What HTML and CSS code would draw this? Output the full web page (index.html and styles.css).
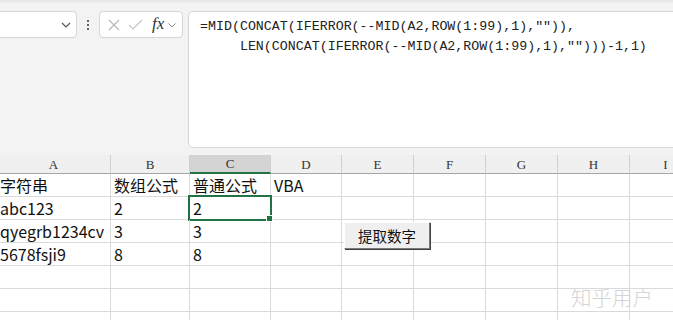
FILE: index.html
```html
<!DOCTYPE html>
<html lang="zh">
<head>
<meta charset="utf-8">
<link rel="stylesheet" href="styles.css">
</head>
<body>
<div class="app">
  <div class="toolbar">
    <div class="namebox">
      <svg class="chev" width="10" height="6" viewBox="0 0 10 6"><path d="M1 1l4 4 4-4" fill="none" stroke="#555" stroke-width="1.2"/></svg>
    </div>
    <div class="dots"><span></span><span></span><span></span></div>
    <div class="fxbox">
      <svg class="ico" width="12" height="12" viewBox="0 0 12 12"><path d="M1 1l10 10M11 1L1 11" stroke="#b8b8b8" stroke-width="1.2" fill="none"/></svg>
      <svg class="ico chk" width="15" height="11" viewBox="0 0 15 11"><path d="M1 6l4 4 9-9" stroke="#c4c4c4" stroke-width="1.2" fill="none"/></svg>
      <span class="fx">fx</span>
      <svg class="chev2" width="8" height="5" viewBox="0 0 8 5"><path d="M.5.5l3.5 3.5 3.5-3.5" fill="none" stroke="#888" stroke-width="1"/></svg>
    </div>
    <div class="formula"><pre class="ftext">=MID(CONCAT(IFERROR(--MID(A2,ROW(1:99),1),"")),
     LEN(CONCAT(IFERROR(--MID(A2,ROW(1:99),1),"")))-1,1)</pre></div>
  </div>
  <div class="sheet">
    <div class="grid">
      <div class="ch">A</div><div class="ch">B</div><div class="ch sel">C</div><div class="ch">D</div><div class="ch">E</div><div class="ch">F</div><div class="ch">G</div><div class="ch">H</div><div class="ch">I</div>

      <div class="c a">字符串</div><div class="c">数组公式</div><div class="c">普通公式</div><div class="c">VBA</div><div class="c"></div><div class="c"></div><div class="c"></div><div class="c"></div><div class="c"></div>

      <div class="c a">abc123</div><div class="c">2</div><div class="c active">2</div><div class="c"></div><div class="c"></div><div class="c"></div><div class="c"></div><div class="c"></div><div class="c"></div>

      <div class="c a">qyegrb1234cv</div><div class="c">3</div><div class="c">3</div><div class="c"></div><div class="c"></div><div class="c"></div><div class="c"></div><div class="c"></div><div class="c"></div>

      <div class="c a">5678fsji9</div><div class="c">8</div><div class="c">8</div><div class="c"></div><div class="c"></div><div class="c"></div><div class="c"></div><div class="c"></div><div class="c"></div>

      <div class="c a"></div><div class="c"></div><div class="c"></div><div class="c"></div><div class="c"></div><div class="c"></div><div class="c"></div><div class="c"></div><div class="c"></div>

      <div class="c a"></div><div class="c"></div><div class="c"></div><div class="c"></div><div class="c"></div><div class="c"></div><div class="c"></div><div class="c"></div><div class="c"></div>

      <div class="c a"></div><div class="c"></div><div class="c"></div><div class="c"></div><div class="c"></div><div class="c"></div><div class="c"></div><div class="c"></div><div class="c"></div>
    </div>
    <button class="btn">提取数字</button>
    <div class="watermark">知乎用户</div>
  </div>
</div>
</body>
</html>
```

FILE: styles.css
```css
html, body {
  margin: 0;
  padding: 0;
  background: #ffffff;
}
.app {
  width: 673px;
  height: 320px;
  overflow: hidden;
  position: relative;
}
.toolbar {
  height: 155px;
  background: #f3f3f3;
  background-image: linear-gradient(#e4e4e4, #f3f3f3 4px);
  display: flex;
  align-items: flex-start;
  padding-top: 11px;
  box-sizing: border-box;
}
.namebox {
  width: 83px;
  height: 27px;
  margin-left: -6px;
  box-sizing: border-box;
  background: #fff;
  border: 1px solid #d6d6d6;
  border-radius: 4px;
  display: flex;
  align-items: center;
  justify-content: flex-end;
  padding-right: 5px;
}
.dots {
  width: 22px;
  height: 27px;
  display: flex;
  flex-direction: column;
  align-items: center;
  justify-content: center;
  gap: 2px;
}
.dots span {
  width: 2px;
  height: 2px;
  background: #333;
  border-radius: 1px;
}
.fxbox {
  width: 84px;
  height: 27px;
  box-sizing: border-box;
  background: #fff;
  border: 1px solid #d6d6d6;
  border-radius: 4px;
  display: flex;
  align-items: center;
  padding-left: 8px;
}
.ico { margin-right: 8px; }
.chk { margin-right: 9px; }
.fx {
  font-family: "Liberation Serif", "DejaVu Serif", serif;
  font-style: italic;
  font-size: 17px;
  color: #333;
  margin-right: 4px;
  line-height: 1;
  margin-top: -2px;
}
.chev2 { margin-top: 1px; }
.formula {
  margin-left: 5px;
  margin-right: -10px;
  flex: 1;
  height: 137px;
  box-sizing: border-box;
  background: #fff;
  border: 1px solid #d6d6d6;
  border-radius: 5px;
  padding: 5px 0 0 11px;
}
.ftext {
  margin: 0;
  font-family: "Liberation Mono", "DejaVu Sans Mono", monospace;
  font-size: 13.3px;
  line-height: 20px;
  color: #222;
}
.sheet {
  position: relative;
}
.grid {
  display: grid;
  grid-template-columns: 114px 79px 81px 71px 72px 72px 72px 72px 72px;
  grid-template-rows: 19px repeat(7, 23px);
  margin-left: -3px;
}
.ch {
  background: #f0f0f0;
  border-right: 1px solid #d0d0d0;
  border-bottom: 1px solid #a6a6a6;
  box-sizing: border-box;
  font-family: "Liberation Serif", "DejaVu Serif", serif;
  font-size: 13px;
  color: #333;
  text-align: center;
  line-height: 19px;
}
.ch.sel {
  background: #d4d4d4;
  border-bottom: 2px solid #217346;
  line-height: 18px;
}
.c {
  border-right: 1px solid #dadada;
  border-bottom: 1px solid #dadada;
  box-sizing: border-box;
  font-family: "Noto Sans CJK SC", "Noto Sans", sans-serif;
  font-size: 16px;
  color: #111;
  line-height: 22px;
  padding-left: 3px;
  white-space: nowrap;
  overflow: visible;
  position: relative;
}
.c.a { padding-left: 3px; }
.c.active::after {
  content: "";
  position: absolute;
  left: -2px;
  top: -2px;
  right: -2px;
  bottom: -2px;
  border: 2px solid #217346;
}
.c.active::before {
  content: "";
  position: absolute;
  right: -3px;
  bottom: -3px;
  width: 5px;
  height: 5px;
  background: #217346;
  border: 1px solid #fff;
  z-index: 2;
}
.btn {
  position: absolute;
  left: 344px;
  top: 67px;
  width: 86px;
  height: 27px;
  box-sizing: border-box;
  background: #efefef;
  border: 1px solid #fff;
  border-right-color: #7a7a7a;
  border-bottom-color: #7a7a7a;
  box-shadow: 1px 1px 0 #404040;
  font-family: "Noto Sans CJK SC", sans-serif;
  font-size: 14.5px;
  color: #111;
  padding: 0;
  line-height: 24px;
}
.watermark {
  position: absolute;
  left: 571px;
  top: 127px;
  font-family: "Noto Sans CJK SC", sans-serif;
  font-weight: 300;
  font-size: 20.5px;
  color: #d4d4d4;
}
```
